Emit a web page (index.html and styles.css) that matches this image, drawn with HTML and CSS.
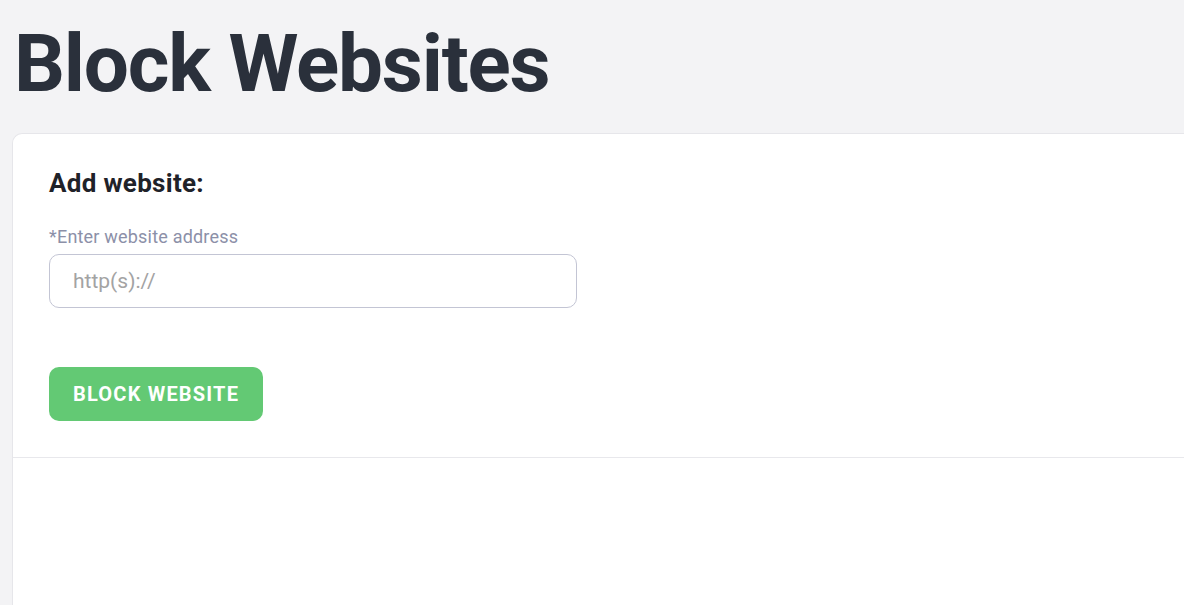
FILE: index.html
```html
<!DOCTYPE html>
<html lang="en">
<head>
<meta charset="utf-8">
<title>Block Websites</title>
<link rel="stylesheet" href="styles.css">
</head>
<body>
  <main class="page">
    <h1 class="page-title">Block Websites</h1>
    <section class="card">
      <form class="card-section add-form">
        <h2 class="section-title">Add website:</h2>
        <label class="field-label" for="site">*Enter website address</label>
        <input class="text-input" id="site" type="text" placeholder="http(s)://">
        <button class="btn-block" type="button">BLOCK WEBSITE</button>
      </form>
      <div class="card-section list-area"></div>
    </section>
  </main>
</body>
</html>
```

FILE: styles.css
```css
* { box-sizing: border-box; }

html, body {
  margin: 0;
  padding: 0;
  height: 100%;
}

body {
  background: #f3f3f5;
  font-family: Roboto, "Liberation Sans", Arial, sans-serif;
  overflow: hidden;
}

.page {
  display: flex;
  flex-direction: column;
  padding: 24px 0 0 12px;
  min-height: 100%;
}

.page-title {
  margin: 0 0 0 2px;
  font-size: 80px;
  line-height: 1;
  font-weight: 700;
  color: #2a303b;
  letter-spacing: -1.2px;
}

.card {
  margin-top: 29px;
  flex: 1;
  background: #fff;
  border: 1px solid #e6e6ea;
  border-right: none;
  border-bottom: none;
  border-top-left-radius: 10px;
}

.card-section {
  padding: 35px 37px 36px 36px;
  border-bottom: 1px solid #e8e8ec;
}

.add-form {
  display: flex;
  flex-direction: column;
  align-items: flex-start;
  margin: 0;
}

.section-title {
  margin: 0;
  font-size: 26px;
  line-height: 29px;
  font-weight: 700;
  color: #1f2229;
  letter-spacing: 0.3px;
}

.field-label {
  margin-top: 29px;
  font-size: 18px;
  line-height: 20px;
  color: #8c90a8;
  letter-spacing: 0.2px;
}

.text-input {
  margin-top: 7px;
  width: 528px;
  height: 54px;
  border: 1px solid #c3c5d4;
  border-radius: 10px;
  padding: 0 23px;
  font-family: inherit;
  font-size: 21px;
  color: #333;
  background: #fff;
  outline: none;
}

.text-input::placeholder {
  color: #a3a3a3;
}

.btn-block {
  margin-top: 59px;
  height: 54px;
  padding: 0 24px;
  border: none;
  border-radius: 10px;
  background: #63c974;
  color: #fff;
  font-family: inherit;
  font-size: 20px;
  font-weight: 700;
  letter-spacing: 1.2px;
  cursor: pointer;
}

.list-area {
  border-bottom: none;
  flex: 1;
}
```
